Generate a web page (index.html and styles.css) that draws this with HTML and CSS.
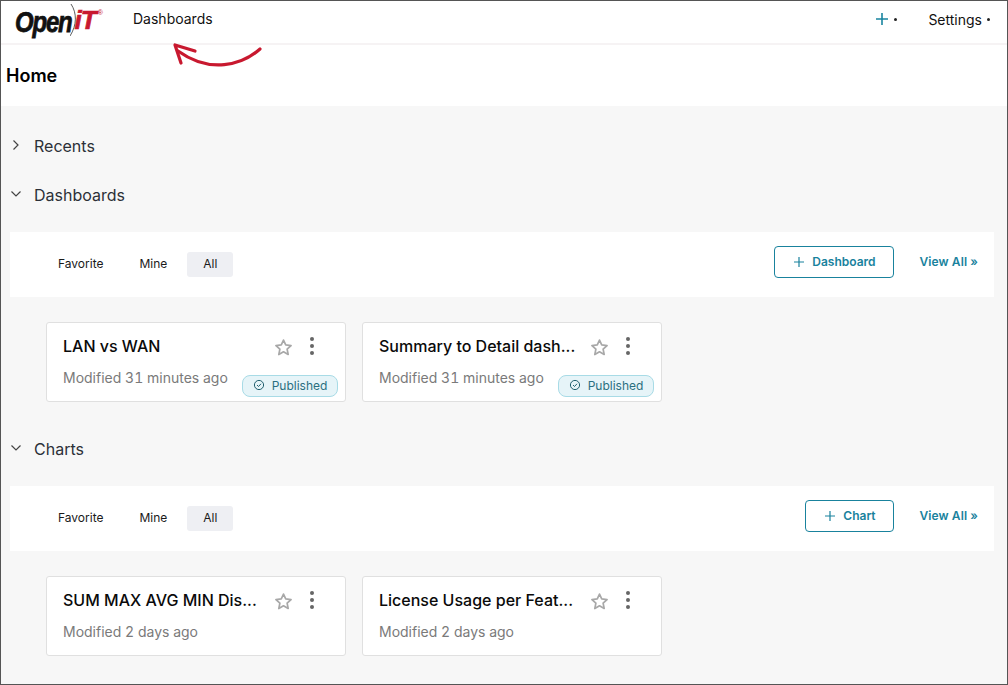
FILE: index.html
```html
<!DOCTYPE html>
<html lang="en">
<head>
<meta charset="utf-8">
<title>Home</title>
<link rel="stylesheet" href="styles.css">
</head>
<body>
<div class="frame">
  <header class="nav">
    <div class="logo"><span class="logo-open">Open</span><svg class="logo-arc" width="8" height="34" viewBox="0 0 8 34"><path d="M1 1C7 10 7 22 0 33" fill="none" stroke="#333" stroke-width="0.8"/></svg><span class="logo-it">iT</span><span class="logo-reg">®</span></div>
    <a class="nav-link">Dashboards</a>
    <div class="nav-right">
      <span class="nav-plus"><svg width="14" height="14" viewBox="0 0 14 14"><path d="M7 1v12M1 7h12" stroke="#1a85a0" stroke-width="1.6" fill="none"/></svg><i class="dot"></i></span>
      <span class="nav-settings">Settings<i class="dot"></i></span>
    </div>
  </header>
  <svg class="arrow" width="92" height="28" viewBox="0 0 92 28"><path d="M88 7C70 23 38 32 6 9" fill="none" stroke="#c8192f" stroke-width="3.2" stroke-linecap="round"/><path d="M23 9L3 3L9 21" fill="none" stroke="#c8192f" stroke-width="3.2" stroke-linecap="round" stroke-linejoin="round"/></svg>
  <div class="title-bar"><h1>Home</h1></div>
  <main class="content">
    <div class="section-head first"><svg class="chev" width="12" height="12" viewBox="0 0 12 12"><path d="M3.500 1.500L8 6L3.500 10.500" fill="none" stroke="#444" stroke-width="1.200"/></svg><span>Recents</span></div>

    <div class="section-head"><svg class="chev" width="12" height="12" viewBox="0 0 12 12"><path d="M1.500 3.500L6 8L10.500 3.500" fill="none" stroke="#444" stroke-width="1.200"/></svg><span>Dashboards</span></div>
    <div class="panel">
      <div class="tabs"><span class="tab">Favorite</span><span class="tab">Mine</span><span class="tab active">All</span></div>
      <div class="actions">
        <button class="add add-dash"><svg width="12" height="12" viewBox="0 0 12 12"><path d="M6 1v10M1 6h10" stroke="#19829d" stroke-width="1.200" fill="none"/></svg>Dashboard</button>
        <a class="view-all">View All »</a>
      </div>
    </div>
    <div class="cards">
      <article class="card">
        <div class="card-top"><h2>LAN vs WAN</h2>
          <svg class="star" width="17" height="17" viewBox="1 1 16 16"><path d="M9 2l2.100 4.600 5 .6-3.700 3.400 1 5L9 13.100 4.600 15.600l1-5L1.900 7.200l5-.6z" fill="none" stroke="#a8a8a8" stroke-width="1.600" stroke-linejoin="round"/></svg>
          <svg class="kebab" width="6" height="20" viewBox="0 0 6 20"><circle cx="3" cy="3" r="2" fill="#666"/><circle cx="3" cy="10" r="2" fill="#666"/><circle cx="3" cy="17" r="2" fill="#666"/></svg></div>
        <p class="meta">Modified 31 minutes ago</p>
        <span class="badge"><svg width="12" height="12" viewBox="0 0 12 12"><circle cx="6" cy="6" r="4.600" fill="none" stroke="#22606f" stroke-width="1"/><path d="M4 6l1.500 1.500L8 4.800" fill="none" stroke="#22606f" stroke-width="1"/></svg>Published</span>
      </article>
      <article class="card">
        <div class="card-top"><h2>Summary to Detail dash...</h2>
          <svg class="star" width="17" height="17" viewBox="1 1 16 16"><path d="M9 2l2.100 4.600 5 .6-3.700 3.400 1 5L9 13.100 4.600 15.600l1-5L1.900 7.200l5-.6z" fill="none" stroke="#a8a8a8" stroke-width="1.600" stroke-linejoin="round"/></svg>
          <svg class="kebab" width="6" height="20" viewBox="0 0 6 20"><circle cx="3" cy="3" r="2" fill="#666"/><circle cx="3" cy="10" r="2" fill="#666"/><circle cx="3" cy="17" r="2" fill="#666"/></svg></div>
        <p class="meta">Modified 31 minutes ago</p>
        <span class="badge"><svg width="12" height="12" viewBox="0 0 12 12"><circle cx="6" cy="6" r="4.600" fill="none" stroke="#22606f" stroke-width="1"/><path d="M4 6l1.500 1.500L8 4.800" fill="none" stroke="#22606f" stroke-width="1"/></svg>Published</span>
      </article>
    </div>

    <div class="section-head after-cards"><svg class="chev" width="12" height="12" viewBox="0 0 12 12"><path d="M1.500 3.500L6 8L10.500 3.500" fill="none" stroke="#444" stroke-width="1.200"/></svg><span>Charts</span></div>
    <div class="panel">
      <div class="tabs"><span class="tab">Favorite</span><span class="tab">Mine</span><span class="tab active">All</span></div>
      <div class="actions">
        <button class="add add-chart"><svg width="12" height="12" viewBox="0 0 12 12"><path d="M6 1v10M1 6h10" stroke="#19829d" stroke-width="1.200" fill="none"/></svg>Chart</button>
        <a class="view-all">View All »</a>
      </div>
    </div>
    <div class="cards">
      <article class="card">
        <div class="card-top"><h2>SUM MAX AVG MIN Dis...</h2>
          <svg class="star" width="17" height="17" viewBox="1 1 16 16"><path d="M9 2l2.100 4.600 5 .6-3.700 3.400 1 5L9 13.100 4.600 15.600l1-5L1.900 7.200l5-.6z" fill="none" stroke="#a8a8a8" stroke-width="1.600" stroke-linejoin="round"/></svg>
          <svg class="kebab" width="6" height="20" viewBox="0 0 6 20"><circle cx="3" cy="3" r="2" fill="#666"/><circle cx="3" cy="10" r="2" fill="#666"/><circle cx="3" cy="17" r="2" fill="#666"/></svg></div>
        <p class="meta">Modified 2 days ago</p>
      </article>
      <article class="card">
        <div class="card-top"><h2>License Usage per Feat...</h2>
          <svg class="star" width="17" height="17" viewBox="1 1 16 16"><path d="M9 2l2.100 4.600 5 .6-3.700 3.400 1 5L9 13.100 4.600 15.600l1-5L1.900 7.200l5-.6z" fill="none" stroke="#a8a8a8" stroke-width="1.600" stroke-linejoin="round"/></svg>
          <svg class="kebab" width="6" height="20" viewBox="0 0 6 20"><circle cx="3" cy="3" r="2" fill="#666"/><circle cx="3" cy="10" r="2" fill="#666"/><circle cx="3" cy="17" r="2" fill="#666"/></svg></div>
        <p class="meta">Modified 2 days ago</p>
      </article>
    </div>
  </main>
</div>
</body>
</html>
```
FILE: styles.css
```css
* { box-sizing: border-box; }
html, body { margin: 0; padding: 0; }
body { font-family: Inter, "Liberation Sans", sans-serif; color: #111; background: #fff; }
.frame { position: relative; width: 1008px; height: 685px; border: 1px solid #555; overflow: hidden; display: flex; flex-direction: column; background: #f7f7f7; }
.nav { height: 44px; flex: none; display: flex; align-items: center; background: #fff; border-bottom: 2px solid #f6f3f4; }
.logo { width: 116px; padding-left: 14px; display: flex; align-items: center; height: 36px; margin-top: -4px; flex: none; }
.logo-open { font: italic 700 24px/1 "Liberation Sans", sans-serif; color: #111; letter-spacing: -1.200px; -webkit-text-stroke: 0.6px #111; transform: scaleY(1.250); display: inline-block; margin-top: 3px; }
.logo-arc { flex: none; margin-left: -2px; }
.logo-it { font: italic 700 26px/1 "Liberation Sans", sans-serif; color: #c8192f; letter-spacing: -1px; -webkit-text-stroke: 0.7px #c8192f; margin-left: -3px; }
.logo-reg { font: 7px/1 "Liberation Sans", sans-serif; color: #c8192f; align-self: flex-start; margin: 7px 0 0 2px; }
.nav-link { font-size: 14px; line-height: 18px; color: #111; padding-left: 16px; margin-top: -6px; }
.nav-right { margin-left: auto; display: flex; align-items: center; font-size: 14px; padding-right: 17px; margin-top: -6px; }
.nav-plus { display: flex; align-items: center; margin-right: 31px; }
.nav-settings { display: flex; align-items: center; color: #111; }
.dot { width: 3px; height: 3px; border-radius: 50%; background: #222; margin-left: 5px; flex: none; }
.arrow { position: absolute; left: 171px; top: 41px; }
.title-bar { height: 61px; flex: none; background: #fff; padding: 20px 5px 0; }
.title-bar h1 { margin: 0; font-size: 18px; line-height: 22px; font-weight: 600; color: #000; }
.content { flex: 1; padding: 0 13px 0 9px; }
.section-head { display: flex; align-items: center; height: 22px; margin-top: 27px; font-size: 16px; color: #2c3038; }
.section-head.first { margin-top: 29px; }
.section-head.after-cards { margin-top: 36px; }
.section-head .chev { margin-right: 12px; width: 12px; flex: none; margin-top: -2px; }
.panel { height: 65px; margin-top: 26px; background: #fff; display: flex; align-items: center; justify-content: space-between; padding: 0 16px 0 38px; }
.tabs { display: flex; align-items: center; margin-top: -1px; }
.tab { font-size: 12px; line-height: 23px; height: 25px; padding: 0 10px; border-radius: 3px; color: #1a1a1a; margin-right: 16px; }
.tab:nth-child(2) { margin-right: 10px; }
.tab.active { background: #eeeff3; padding: 0; width: 46px; margin-right: 0; text-align: center; }
.actions { display: flex; align-items: center; gap: 25px; margin-top: -6px; }
.add { height: 32px; display: flex; align-items: center; justify-content: center; gap: 7px; padding: 0; background: #fff; border: 1px solid #19829d; border-radius: 4px; color: #19829d; font: 600 12px Inter, "Liberation Sans", sans-serif; }
.add-dash { width: 120px; }
.add-chart { width: 89px; }
.view-all { font-size: 12px; letter-spacing: 0.1px; font-weight: 600; color: #19829d; }
.cards { display: flex; gap: 16px; margin: 25px 0 0 36px; }
.card { position: relative; width: 300px; height: 80px; background: #fff; border: 1px solid #e0e0e0; border-radius: 3px; padding: 13px 16px 0; }
.card-top { display: flex; align-items: center; height: 20px; }
.card-top h2 { margin: 0; font-size: 16px; line-height: 20px; font-weight: 500; color: #0a0a0a; flex: 1; white-space: nowrap; overflow: hidden; }
.star { flex: none; margin: 2px 17px 0 0; }
.kebab { flex: none; margin-right: 14px; }
.meta { margin: 13px 0 0; font-size: 14px; line-height: 18px; color: #7a7a7a; font-variant-numeric: tabular-nums; }
.badge { position: absolute; right: 7px; bottom: 4px; width: 96px; height: 22px; padding-bottom: 2px; border: 1px solid #a8dbe6; border-radius: 8px; background: #e6f4f8; color: #2a6f80; font-size: 12px; display: flex; align-items: center; justify-content: center; gap: 7px; }
```
